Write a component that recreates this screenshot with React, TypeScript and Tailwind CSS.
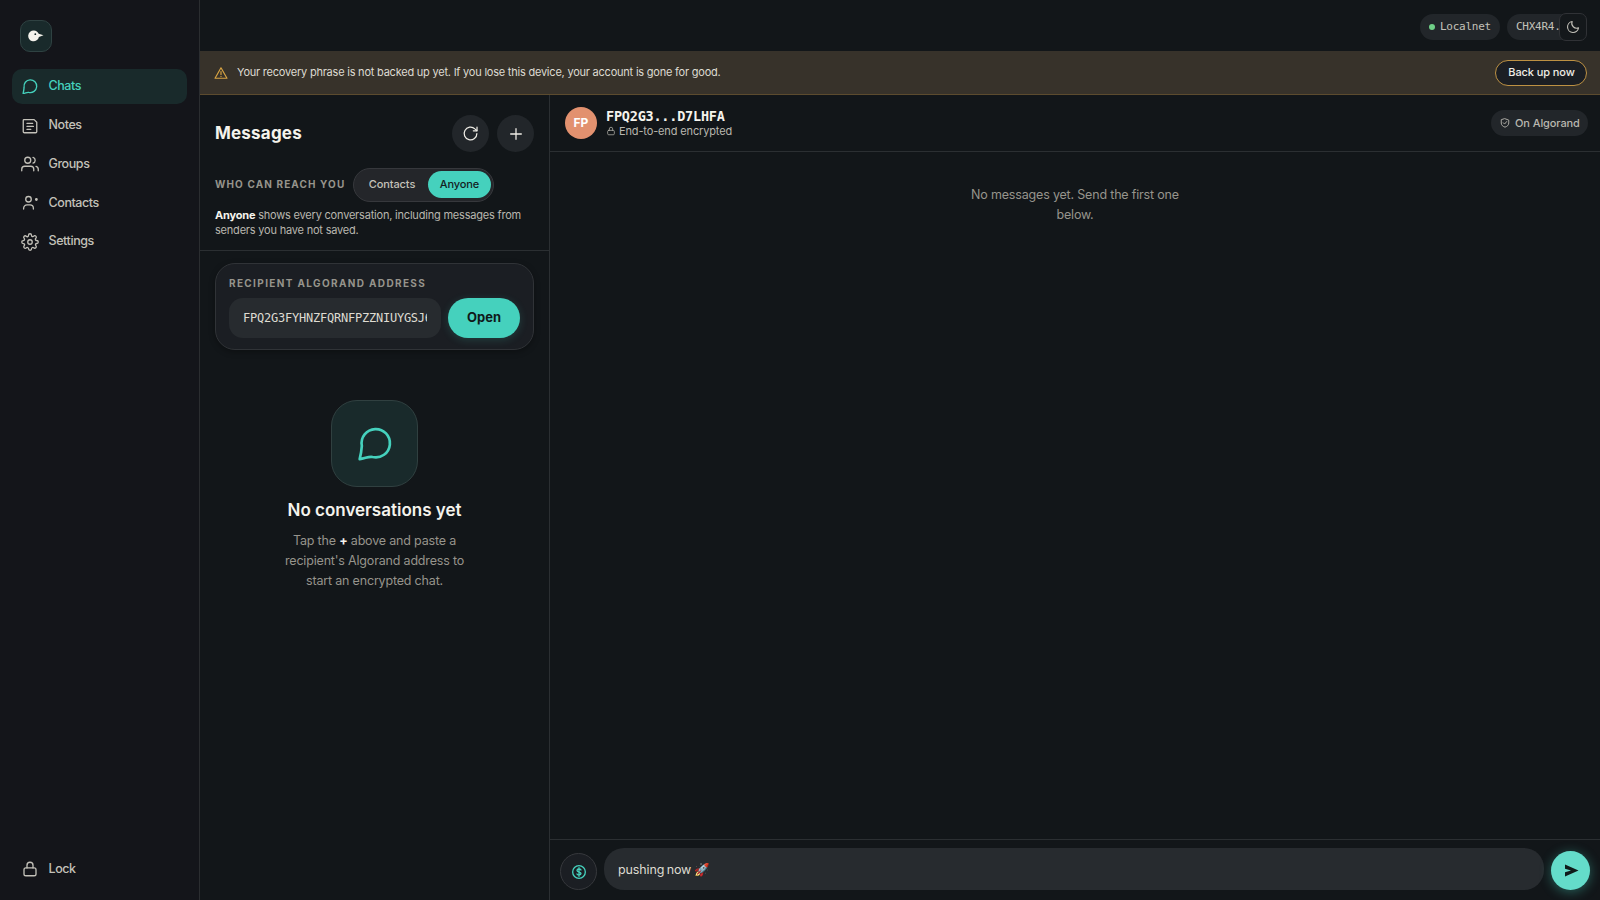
import { ReactNode } from "react";

// Icons
interface IconProps {
  children: ReactNode;
  size?: number;
  stroke?: number;
  className?: string;
}

function Icon({ children, size = 16, stroke = 1.75, className = "" }: IconProps) {
  return (
    <svg
      width={size}
      height={size}
      viewBox="0 0 24 24"
      fill="none"
      stroke="currentColor"
      strokeWidth={stroke}
      strokeLinecap="round"
      strokeLinejoin="round"
      className={`shrink-0 ${className}`}
    >
      {children}
    </svg>
  );
}

const chatPath = (
  <path d="M2.800 20.500 C3.600 17.500 3.900 15.500 4.100 12.500 A8.500 8.500 0 1 1 10.500 19.200 C8.500 18.600 6 20.100 2.800 20.500z" />
);

const lockPath = (
  <>
    <rect x="4" y="10.500" width="16" height="10.500" rx="2.500" />
    <path d="M8 10.500V7a4 4 0 0 1 8 0v3.500" />
  </>
);

const notesPath = (
  <>
    <path d="M4 3.500h13.500L21 7v12.500a1.500 1.500 0 0 1-1.500 1.500h-15A1.500 1.500 0 0 1 3 19.500v-15a1 1 0 0 1 1-1z" />
    <path d="M8 8.500h7.500M8 12.500h8.500M8 16.500h5" />
  </>
);

const groupsPath = (
  <>
    <circle cx="9" cy="7" r="4" />
    <path d="M1 21v-2a4 4 0 0 1 4-4h8a4 4 0 0 1 4 4v2" />
    <path d="M16 3.200a4 4 0 0 1 0 7.700" />
    <path d="M23 21v-2a4 4 0 0 0-3-3.870" />
  </>
);

const contactsPath = (
  <>
    <circle cx="10" cy="7" r="3.700" />
    <path d="M3.500 20v-1a4.500 4.500 0 0 1 4.500-4.500h4a4.500 4.500 0 0 1 4.500 4.500v1" />
    <circle cx="20.500" cy="7.300" r="1" fill="currentColor" />
  </>
);

const settingsPath = (
  <>
    <circle cx="12" cy="12" r="3" />
    <path d="M19.400 15a1.650 1.650 0 0 0 .33 1.820l.06.06a2 2 0 1 1-2.830 2.830l-.06-.06a1.650 1.650 0 0 0-2.800 1.170V21a2 2 0 0 1-4 0v-.09A1.650 1.650 0 0 0 9 19.400a1.650 1.650 0 0 0-1.820.33l-.06.06a2 2 0 1 1-2.830-2.830l.06-.06a1.650 1.650 0 0 0-1.170-2.800H3a2 2 0 0 1 0-4h.09A1.650 1.650 0 0 0 4.600 9a1.650 1.650 0 0 0-.33-1.820l-.06-.06a2 2 0 1 1 2.830-2.830l.06.06A1.650 1.650 0 0 0 10 3.090V3a2 2 0 0 1 4 0v.09a1.650 1.650 0 0 0 2.900 1.170l.06-.06a2 2 0 1 1 2.830 2.830l-.06.06A1.650 1.650 0 0 0 20.910 10H21a2 2 0 0 1 0 4h-.09a1.650 1.650 0 0 0-1.510 1z" />
  </>
);

// Sidebar
interface NavItemProps {
  icon: ReactNode;
  label: string;
  active?: boolean;
}

function NavItem({ icon, label, active = false }: NavItemProps) {
  return (
    <a
      className={`flex h-[34.7px] items-center gap-[9.5px] rounded-[10px] px-[9px] text-[12.5px] font-medium tracking-[-0.42px] ${
        active ? "bg-[#192a2b] text-[#45d1bd]" : "text-[#c3c1b9]"
      }`}
    >
      <Icon size={18} className="mt-px">
        {icon}
      </Icon>
      <span className="pt-px">{label}</span>
    </a>
  );
}

function Sidebar() {
  return (
    <aside className="flex w-[200px] shrink-0 flex-col border-r border-[#2b2d30] bg-[#14151a] px-3 pt-5 pb-[14px]">
      <div className="ml-2 flex size-8 items-center justify-center rounded-[10px] border border-[#2f4242] bg-[#192a2b]">
        <svg width="16" height="12" viewBox="0 0 16 12">
          <path
            d="M6 .5c2.200 0 3.800 1.300 4.700 3.200L15.500 5.200 10.900 7A5.400 5.400 0 1 1 6 .5z"
            fill="#f5f3ec"
          />
          <circle cx="7.300" cy="4.200" r=".9" fill="#192a2b" />
        </svg>
      </div>
      <nav className="mt-[17px] flex flex-col gap-1">
        <NavItem icon={chatPath} label="Chats" active />
        <NavItem icon={notesPath} label="Notes" />
        <NavItem icon={groupsPath} label="Groups" />
        <NavItem icon={contactsPath} label="Contacts" />
        <NavItem icon={settingsPath} label="Settings" />
      </nav>
      <div className="mt-auto">
        <NavItem icon={lockPath} label="Lock" />
      </div>
    </aside>
  );
}

// Top bar
function TopBar() {
  return (
    <header className="flex h-[51px] shrink-0 items-center justify-end pt-[2px] pr-[13px] font-['DejaVu_Sans_Mono',monospace] text-[11px] tracking-[-0.25px] text-[#c3c1b9]">
      <div className="mr-[7px] flex h-[26px] w-20 items-center gap-[5px] rounded-full bg-[#22262a] pl-[9px]">
        <span className="size-[6px] rounded-full bg-[#6fcf87]" />
        <span className="pt-px">Localnet</span>
      </div>
      <div className="flex h-[26px] w-[67px] items-center rounded-full bg-[#22262a] pt-px pl-[9px]">
        CHX4R4...
      </div>
      <button className="z-10 -ml-[15px] flex size-7 shrink-0 items-center justify-center rounded-[7px] border border-[#303236] bg-[#14181b]">
        <Icon size={14} stroke={1.9}>
          <path d="M10.500 2.500a8.500 8.500 0 0 0 11 11A9.500 9.500 0 1 1 10.500 2.500z" />
        </Icon>
      </button>
    </header>
  );
}

function BackupBanner() {
  return (
    <div className="flex h-11 shrink-0 items-center border-b border-[#5c4b2e] bg-[#37322a] pr-[13px] pl-[14px]">
      <Icon size={14} stroke={2} className="text-[#d9a443]">
        <path d="M12 3 1.800 21h20.400z" />
        <path d="M12 9.500v5M12 17.500v.5" />
      </Icon>
      <p className="ml-[9px] text-[11px] tracking-[-0.22px] text-[#dedbd2]">
        Your recovery phrase is not backed up yet. If you lose this device, your account is gone
        for good.
      </p>
      <button className="ml-auto h-[26px] w-[92px] rounded-full border border-[#bd9143] bg-[#1b1e23] pl-px text-[11px] font-medium tracking-[-0.1px] whitespace-nowrap text-[#efede6]">
        Back up now
      </button>
    </div>
  );
}

// Conversation list
function MessagesPanel() {
  return (
    <section className="flex w-[350px] shrink-0 flex-col border-r border-[#2b2f32]">
      <div className="h-[156px] shrink-0 border-b border-[#2b2f32] px-[15px] pt-5">
        <div className="flex items-center gap-2">
          <h1 className="mr-auto pt-px text-[17px] font-bold tracking-[0.2px] text-[#f5f3ec]">
            Messages
          </h1>
          <button className="flex size-[37px] items-center justify-center rounded-full bg-[#22262a] text-[#efede6]">
            <Icon size={17}>
              <path d="M21 12a9 9 0 1 1-2.800-6.500L21 8" />
              <path d="M21.200 3v5.200H16" />
            </Icon>
          </button>
          <button className="flex size-[37px] items-center justify-center rounded-full bg-[#22262a] text-[#efede6]">
            <Icon size={16} stroke={1.9}>
              <path d="M12 4v16M4 12h16" />
            </Icon>
          </button>
        </div>
        <div className="mt-[15.5px] flex items-center">
          <span className="w-[138px] text-[10px] font-bold tracking-[1.120px] whitespace-nowrap text-[#96948c]">
            WHO CAN REACH YOU
          </span>
          <div className="flex h-[34px] w-[141px] items-center rounded-full border border-[#36383c] bg-[#24262a] p-[2px] text-[11px] font-medium tracking-[-0.1px]">
            <span className="flex-1 text-center text-[#c3c1b9]">Contacts</span>
            <span className="flex h-[27px] w-[63px] items-center justify-center rounded-full bg-[#45d1bd] text-[#14201f]">
              Anyone
            </span>
          </div>
        </div>
        <p className="mt-[6.5px] text-[11px] leading-[15px] tracking-[-0.2px] whitespace-nowrap text-[#b9b7af]">
          <b className="text-[#f5f3ec]">Anyone</b> shows every conversation, including messages from
          <br />
          senders you have not saved.
        </p>
      </div>

      <div className="mx-[15px] mt-3 h-[87px] shrink-0 rounded-[20px] border border-[#303337] bg-[#1b1e23] px-[13px] pt-3 shadow-[0_2px_6px_rgba(0,0,0,0.3)]">
        <div className="h-[14px] text-[10px] leading-[14px] font-bold tracking-[1.360px] whitespace-nowrap text-[#96948c]">
          RECIPIENT ALGORAND ADDRESS
        </div>
        <div className="mt-2 flex gap-[7px]">
          <div className="h-10 w-[212px] rounded-[14px] bg-[#272b2f] px-[14px] font-['DejaVu_Sans_Mono',monospace] text-[12px] leading-10 tracking-[-0.23px] text-[#dedbd2]">
            <div className="overflow-hidden whitespace-nowrap">FPQ2G3FYHNZFQRNFPZZNIUYGSJ6</div>
          </div>
          <button className="h-10 w-[73px] rounded-full bg-[#45d1bd] text-[13px] font-bold text-[#0f1a1a] shadow-[0_2px_8px_rgba(69,209,189,0.18)]">
            Open
          </button>
        </div>
      </div>

      <div className="mt-[50px] flex flex-col items-center text-center">
        <div className="flex size-[87px] items-center justify-center rounded-[26px] border border-[#304040] bg-[#192a2b] text-[#45d1bd]">
          <Icon size={40} stroke={1.6} className="mt-[3px]">
            {chatPath}
          </Icon>
        </div>
        <h2 className="mt-[11px] text-[17px] leading-6 font-semibold text-[#f5f3ec]">
          No conversations yet
        </h2>
        <p className="mt-[9px] text-[12.5px] leading-5 tracking-[-0.18px] whitespace-nowrap text-[#96948c]">
          Tap the <b className="text-[#f5f3ec]">+</b> above and paste a
          <br />
          recipient's Algorand address to
          <br />
          start an encrypted chat.
        </p>
      </div>
    </section>
  );
}

// Open thread
function Thread() {
  return (
    <section className="flex min-w-0 flex-1 flex-col">
      <div className="flex h-[57px] shrink-0 items-center border-b border-[#2b2f32] pr-3 pl-[15px]">
        <div className="flex size-8 items-center justify-center rounded-full bg-[#e2916f] text-[12px] font-bold text-white">
          FP
        </div>
        <div className="ml-[9px] pt-[2px]">
          <div className="font-['DejaVu_Sans_Mono',monospace] text-[13.500px] leading-[15px] font-bold tracking-[-0.22px] text-[#f5f3ec]">
            FPQ2G3...D7LHFA
          </div>
          <div className="flex items-center gap-[3px] text-[11px] leading-[15px] tracking-[-0.14px] text-[#b9b7af]">
            <Icon size={10} className="-mt-px">
              {lockPath}
            </Icon>
            End-to-end encrypted
          </div>
        </div>
        <div className="ml-auto flex h-[26px] w-[97px] items-center gap-[5px] rounded-full bg-[#22262a] pl-[9px] text-[11px] font-medium tracking-[-0.1px] whitespace-nowrap text-[#b9b7af]">
          <Icon size={10} stroke={2.200}>
            <path d="M12 1.800 21 5v7c0 5-4 8.500-9 10-5-1.500-9-5-9-10V5z" />
            <path d="m8 11.500 3 3 5-6" />
          </Icon>
          On Algorand
        </div>
      </div>

      <div className="flex-1 pt-[33px] text-center text-[12.5px] leading-5 tracking-[-0.18px] text-[#96948c]">
        No messages yet. Send the first one
        <br />
        below.
      </div>

      <div className="flex h-[61px] shrink-0 items-end gap-[7px] border-t border-[#2b2f32] pr-[10px] pb-[10px] pl-[10px]">
        <button className="flex size-[37px] shrink-0 items-center justify-center rounded-full border border-[#36383c] bg-[#1b1e23] text-[#45d1bd]">
          <Icon size={16} stroke={2}>
            <circle cx="12" cy="12" r="9.500" />
            <path d="M15 9c-.5-1-1.600-1.500-3-1.500-1.700 0-3 .8-3 2.200 0 3.200 6 1.500 6 4.600 0 1.400-1.300 2.200-3 2.200-1.500 0-2.600-.5-3.100-1.500M12 5.500v13" />
          </Icon>
        </button>
        <div className="flex h-[42px] flex-1 items-center rounded-[20px] bg-[#272b2f] px-[14px] pt-[2px] text-[12.5px] tracking-[-0.12px] [word-spacing:-1px] text-[#dedbd2]">
          pushing now 🚀
        </div>
        <button className="flex size-[39px] shrink-0 items-center justify-center rounded-full bg-[#64dcca] shadow-[0_2px_12px_rgba(69,209,189,0.4)]">
          <svg width="15" height="13" viewBox="0 0 15 13" className="ml-[2px]">
            <path d="M1 .5 14.500 6.500 1 12.500V8.200L7 6.500 1 4.800z" fill="#0f1a1a" />
          </svg>
        </button>
      </div>
    </section>
  );
}

export default function App() {
  return (
    <div className="flex h-screen w-screen overflow-hidden bg-[#121619] font-['Inter','Liberation_Sans',sans-serif]">
      <Sidebar />
      <main className="flex min-w-0 flex-1 flex-col">
        <TopBar />
        <BackupBanner />
        <div className="flex min-h-0 flex-1">
          <MessagesPanel />
          <Thread />
        </div>
      </main>
    </div>
  );
}
